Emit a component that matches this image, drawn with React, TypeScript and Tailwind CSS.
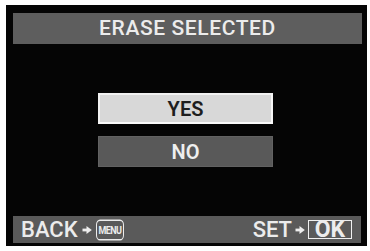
import React from "react";

function Arrow() {
  return (
    <svg width="10" height="10" viewBox="0 0 10 10" className="shrink-0">
      <path d="M0.5 5H5.5" stroke="#ededed" strokeWidth="2.8" />
      <path d="M4.5 1L9.8 5L4.5 9Z" fill="#ededed" />
    </svg>
  );
}

export default function App() {
  const font = { fontFamily: "Roboto, 'Liberation Sans', Arial, sans-serif" };
  return (
    <div className="w-[370px] h-[251px] bg-white pt-[5px] pl-[6px]" style={font}>
      <div className="w-[361px] h-[241px] bg-[#050505] flex flex-col pl-[7px]">
        <div className="mt-[8px] w-[349px] h-[31px] bg-[#5e5e5e] flex items-center justify-center text-[#ececec] text-[21px] font-medium tracking-[0.6px]">
          ERASE SELECTED
        </div>

        <div className="mt-[49px] ml-[85px] flex flex-col gap-[12px]">
          <div className="w-[175px] h-[31px] bg-[#d8d8d8] border-[2px] border-t-[#f2f2f2] border-l-[#f2f2f2] border-r-[#f7f7f7] border-b-[#fafafa] flex items-center justify-center text-[#1e1e1e] text-[20px] font-semibold">
            YES
          </div>
          <div className="w-[175px] h-[31px] bg-[#595959] border border-[#626262] flex items-center justify-center text-[#efefef] text-[20px] font-semibold">
            NO
          </div>
        </div>

        <div className="mt-auto mb-[3px] w-[348px] h-[27px] bg-[#5a5a5a] flex items-center justify-between pl-[8px] pr-[9px] text-[#ececec]">
          <div className="flex items-center gap-[4px]">
            <span className="text-[22px] font-medium leading-none">BACK</span>
            <Arrow />
            <span className="h-[16px] px-[2px] rounded-[4px] border border-[#ececec] flex items-center text-[9px] font-bold leading-none tracking-[-0.6px] scale-y-[1.3]">
              MENU
            </span>
          </div>
          <div className="flex items-center gap-[3px]">
            <span className="text-[22px] font-medium leading-none">SET</span>
            <Arrow />
            <span className="h-[19px] w-[44px] border-[1.5px] border-[#f0f0f0] flex items-center justify-center text-[23px] font-bold leading-none">
              OK
            </span>
          </div>
        </div>
      </div>
    </div>
  );
}
